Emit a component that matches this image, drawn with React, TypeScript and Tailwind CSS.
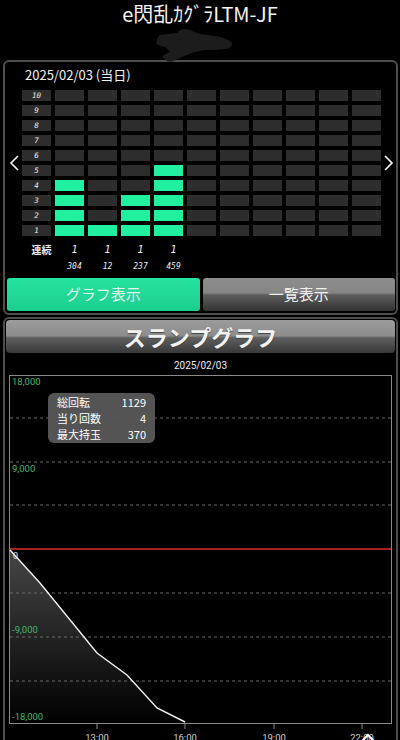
import React from "react";

const ROWS = [10, 9, 8, 7, 6, 5, 4, 3, 2, 1];
// how many hits each column has (counted from row 1 upward)
const cols = [4, 1, 3, 5, 0, 0, 0, 0, 0, 0];
const streaks = ["1", "1", "1", "1", "", "", "", "", "", ""];
const spins = ["304", "12", "237", "459", "", "", "", "", "", ""];

const jp = { fontFamily: '"Noto Sans CJK JP", "Noto Sans", sans-serif' };
const digi = { fontFamily: '"DejaVu Sans Mono", "Liberation Mono", monospace' };

function Chevron({ dir }: { dir: "left" | "right" }) {
  return (
    <svg width="10" height="16" viewBox="0 0 10 16">
      <polyline
        points={dir === "left" ? "9,1 2,8 9,15" : "1,1 8,8 1,15"}
        fill="none"
        stroke="#fff"
        strokeWidth="1.6"
      />
    </svg>
  );
}

function Chart() {
  const line = "1,175 31,208 88,278 118,300 148,333 176,347";
  return (
    <div className="relative ml-[4px] h-[365px] w-[388px]">
      <svg width="388" height="365" className="block overflow-visible">
        <defs>
          <linearGradient id="fill" x1="0" y1="0" x2="0" y2="1">
            <stop offset="0%" stopColor="#464646" />
            <stop offset="100%" stopColor="#000" />
          </linearGradient>
        </defs>
        <polygon points={`${line} 176,348 1,348`} fill="url(#fill)" />
        {[43, 87, 130, 218, 262, 306].map((y) => (
          <line key={y} x1="1" x2="382" y1={y} y2={y} stroke="#6a6a6a" strokeDasharray="3 3" />
        ))}
        <line x1="1" x2="382" y1="174" y2="174" stroke="#a82020" strokeWidth="2" />
        <rect x="0.5" y="0.5" width="382" height="348" fill="none" stroke="#8a8a8a" />
        <polyline points={line} fill="none" stroke="#f2f2f2" strokeWidth="1.4" />
        <g fontSize="9.5" fill="#41b86d" style={{ fontFamily: '"Roboto", sans-serif' }}>
          <text x="3" y="10">18,000</text>
          <text x="3" y="97">9,000</text>
          <text x="3" y="258">-9,000</text>
          <text x="3" y="345">-18,000</text>
        </g>
        <text x="4" y="184" fontSize="9" fill="#e0e0e0" style={{ fontFamily: '"Roboto", sans-serif' }}>0</text>
        {[
          [88, "13:00"],
          [176, "16:00"],
          [265, "19:00"],
          [353, "22:00"],
        ].map(([x, t]) => (
          <g key={t as string}>
            <line x1={x as number} x2={x as number} y1="348" y2="354" stroke="#8a8a8a" />
            <text
              x={x as number}
              y="366"
              fontSize="9.5"
              fill="#cfcfcf"
              textAnchor="middle"
              style={{ fontFamily: '"Roboto", sans-serif' }}
            >
              {t}
            </text>
          </g>
        ))}
        <polyline points="352,367 359,360 366,367" fill="none" stroke="#fff" strokeWidth="2" />
      </svg>

      <div
        className="absolute left-[39px] top-[18px] w-[107px] rounded-[6px] bg-[#595959]/95 px-[9px] py-[1px] text-[11px] leading-[16px] text-white"
        style={jp}
      >
        <div className="flex justify-between"><span>総回転</span><span>1129</span></div>
        <div className="flex justify-between"><span>当り回数</span><span>4</span></div>
        <div className="flex justify-between"><span>最大持玉</span><span>370</span></div>
      </div>
    </div>
  );
}

export default function App() {
  return (
    <div className="h-[740px] w-[400px] overflow-hidden bg-black text-white" style={jp}>
      {/* ── title ── */}
      <div className="flex h-[60px] flex-col items-center">
        <div className="h-[28px] text-[20px] leading-[28px] text-[#f4f4f4]">e閃乱ｶｸﾞﾗLTM-JF</div>
        <svg width="80" height="32" viewBox="0 0 80 32" className="ml-[-12px] overflow-visible">
          <path
            d="M3 12 C4 9 5 7 6 7 C12 6 18 6 24 5 C25 2 28 1 30 1 C33 1 35 2 36 2 C40 4 43 5 46 6 C52 7 56 7 61 8 C66 9 71 10 74 12 C78 14 79 16 78 17 C76 20 74 21 71 21 C64 22 57 22 51 22 C47 23 44 23 41 24 C35 26 30 28 26 30 C22 32 19 33 16 34 C13 33 11 32 11 31 C9 30 8 29 9 28 C11 26 14 25 16 24 C14 22 13 20 11 19 C8 18 6 18 4 17 C2 16 2 14 3 12 Z"
            fill="#1c1c1c"
          />
        </svg>
      </div>

      {/* ── hit history panel ── */}
      <div className="ml-[3px] mr-[2px] rounded-[6px] border-2 border-[#4e4e4e] pb-[2px] pt-[5px]">
        <div className="pl-[20px] text-[13px] leading-[16px] text-[#f2f2f2]">2025/02/03 (当日)</div>

        <div className="mt-[7px] flex items-center">
          <div className="flex w-[17px] justify-center">
            <Chevron dir="left" />
          </div>
          <div className="grid grid-cols-[repeat(11,29px)] gap-x-[4px] gap-y-[4px]">
            {ROWS.map((r) => (
              <React.Fragment key={r}>
                <div
                  className="flex h-[11px] items-center justify-center bg-[#2d2d2d] text-[7.5px] italic leading-none text-[#eee]"
                  style={digi}
                >
                  {r}
                </div>
                {cols.map((n, i) => (
                  <div key={i} className={`h-[11px] ${n >= r ? "bg-[#20f0a0]" : "bg-[#2d2d2d]"}`} />
                ))}
              </React.Fragment>
            ))}
          </div>
          <div className="flex flex-1 justify-center">
            <Chevron dir="right" />
          </div>
        </div>

        <div className="ml-[22px] mt-[7px] grid grid-cols-[repeat(11,29px)] gap-x-[4px]">
          <div className="text-center text-[10px] font-bold leading-[14px] text-[#eee]">連続</div>
          {streaks.map((s, i) => (
            <div key={i} className="text-center text-[10px] italic leading-[14px] text-[#eee]" style={digi}>
              {s}
            </div>
          ))}
        </div>
        <div className="ml-[22px] mt-[3px] grid grid-cols-[repeat(11,29px)] gap-x-[4px]">
          <div />
          {spins.map((s, i) => (
            <div key={i} className="text-center text-[8px] italic leading-[14px] text-[#eee]" style={digi}>
              {s}
            </div>
          ))}
        </div>

        <div className="mt-[4px] grid grid-cols-2 gap-[3px] pl-[2px] pr-[1px]">
          <button className="h-[33px] rounded-[3px] bg-[linear-gradient(to_bottom,#26e3a0,#1ccf8e)] text-[15px] text-[#e4f5ec]">
            グラフ表示
          </button>
          <button className="h-[33px] rounded-[3px] bg-[linear-gradient(to_bottom,#8e8e8e_0%,#858585_45%,#5c5c5c_52%,#333_100%)] text-[15px] text-[#f0f0f0]">
            一覧表示
          </button>
        </div>
      </div>

      {/* ── slump graph panel ── */}
      <div className="ml-[3px] mr-[2px] mt-[2px] h-[430px] rounded-[6px] border-2 border-[#4e4e4e] pt-[1px]">
        <div className="mx-[1px] flex h-[33px] items-center justify-center rounded-[4px] bg-[linear-gradient(to_bottom,#9c9c9c_0%,#8c8c8c_48%,#5e5e5e_54%,#383838_100%)] text-[22px] font-bold text-[#f2f2f2] [text-shadow:0_1px_1px_#444]">
          スランプグラフ
        </div>
        <div className="mt-[6px] text-center text-[10px] leading-[14px] text-[#eee]" style={{ fontFamily: '"Roboto", sans-serif' }}>
          2025/02/03
        </div>
        <div className="mt-[2px]">
          <Chart />
        </div>
      </div>
    </div>
  );
}
